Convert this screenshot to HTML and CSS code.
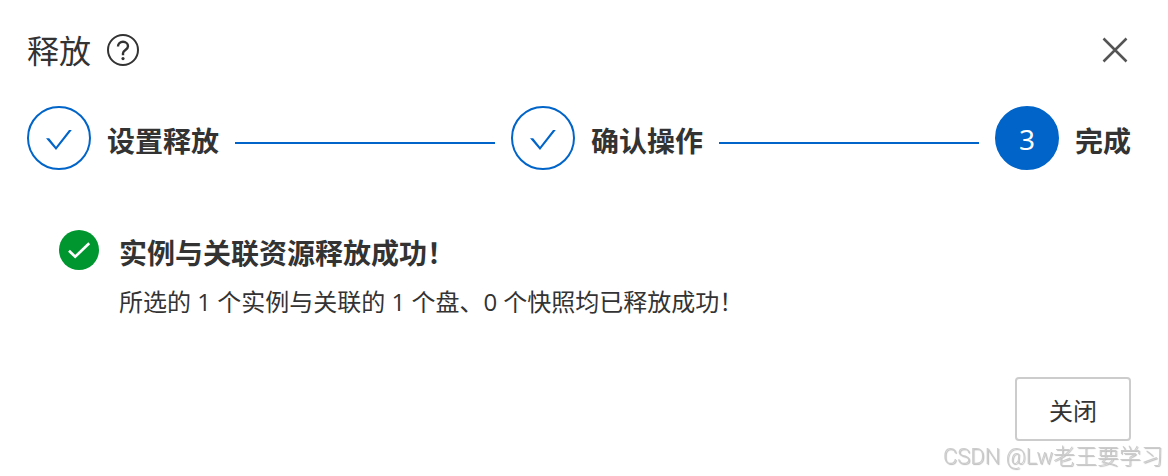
FILE: index.html
```html
<!DOCTYPE html>
<html lang="zh-cn">

<head>
    <meta charset="UTF-8">
    <meta name="viewport" content="width=device-width, initial-scale=1.0">
    <title>释放</title>
    <link rel="stylesheet" href="styles.css">
</head>

<body>
    <div class="dialog" role="dialog" aria-labelledby="dialog-title">
        <div class="header">
            <h1 class="title" id="dialog-title">释放</h1>
            <button class="icon-btn help" type="button" aria-label="帮助">
                <svg width="32" height="32" viewBox="0 0 32 32" fill="none" stroke="#333" stroke-width="2">
                    <circle cx="16" cy="16" r="15" />
                    <path d="M11 12.6C11 9.6 13.2 7.8 16 7.8s5 1.8 5 4.5c0 3.6-5 3.8-5 7v1.9" stroke-width="2.4" />
                    <circle cx="16" cy="24.6" r="1.6" fill="#333" stroke="none" />
                </svg>
            </button>
            <button class="icon-btn close" type="button" aria-label="关闭对话框">
                <svg width="32" height="32" viewBox="0 0 32 32" fill="none" stroke="#555" stroke-width="2.5">
                    <path d="M4.5 4.5l23 23M27.5 4.5l-23 23" />
                </svg>
            </button>
        </div>

        <ol class="steps">
            <li class="step">
                <span class="step-node">
                    <svg width="28" height="24" viewBox="0 0 28 24" fill="#0064c8">
                        <path d="M1 11.2h3.2l6.8 8.5L24 3h2.8L11 23z" />
                    </svg>
                </span>
                <span class="step-title">设置释放</span>
            </li>
            <li class="step">
                <span class="step-node">
                    <svg width="28" height="24" viewBox="0 0 28 24" fill="#0064c8">
                        <path d="M1 11.2h3.2l6.8 8.5L24 3h2.8L11 23z" />
                    </svg>
                </span>
                <span class="step-title">确认操作</span>
            </li>
            <li class="step step-active" aria-current="step">
                <span class="step-node">3</span>
                <span class="step-title">完成</span>
            </li>
        </ol>

        <div class="result">
            <svg class="result-icon" width="40" height="40" viewBox="0 0 40 40" fill="none">
                <circle cx="20" cy="20" r="20" fill="#00962f" />
                <path d="M10 20.8l6.2 6L30.2 13.2" stroke="#fff" stroke-width="2.6" />
            </svg>
            <div class="result-body">
                <h2 class="result-title">实例与关联资源释放成功！</h2>
                <p class="result-desc">所选的 1 个实例与关联的 1 个盘、0 个快照均已释放成功！</p>
            </div>
        </div>

        <div class="footer">
            <button class="btn" type="button">关闭</button>
        </div>
    </div>
    <div class="watermark">CSDN @Lw老王要学习</div>
</body>

</html>
```

FILE: styles.css
```css
* {
    box-sizing: border-box;
}

body {
    margin: 0;
    color: #333;
    background-color: #fff;
    font-family: "Open Sans", "Noto Sans CJK SC", sans-serif;
}

button {
    font-family: inherit;
    color: inherit;
    cursor: pointer;
}

.dialog {
    padding: 28px 37px 35px 27px;
}

.header {
    display: flex;
    align-items: center;
    height: 44px;
}

.title {
    margin: 0;
    padding-top: 2px;
    font-size: 32px;
    font-weight: 400;
    line-height: 44px;
}

.icon-btn {
    display: flex;
    padding: 0;
    border: none;
    background: none;
}

.help {
    margin-left: 16px;
}

.close {
    margin-left: auto;
}

/* steps */
.steps {
    display: flex;
    margin: 34px 0 0;
    padding: 0;
    list-style: none;
}

.step {
    display: flex;
    flex: 1;
    align-items: center;
    gap: 16px;
    margin-right: 16px;
}

.step:last-child {
    flex: none;
    margin-right: 0;
}

/* line to the next step */
.step:not(:last-child)::after {
    content: "";
    flex: 1;
    height: 2px;
    margin-top: 10px;
    background-color: #0064c8;
}

.step-node {
    display: flex;
    align-items: center;
    justify-content: center;
    width: 64px;
    height: 64px;
    padding-top: 2px;
    border: 2px solid #0064c8;
    border-radius: 50%;
    font-family: "Noto Sans", "Noto Sans CJK SC", sans-serif;
    font-size: 28px;
    line-height: 40px;
}

.step-active .step-node {
    color: #fff;
    background-color: #0064c8;
}

.step-title {
    padding-top: 6px;
    font-size: 28px;
    font-weight: 700;
    line-height: 40px;
}

/* result */
.result {
    display: flex;
    gap: 20px;
    margin-top: 60px;
    padding-left: 32px;
}

.result-icon {
    flex: none;
}

.result-title {
    margin: 0;
    font-size: 28px;
    line-height: 46px;
}

.result-desc {
    margin: 6px 0 0;
    font-size: 24px;
    font-weight: 400;
    line-height: 40px;
}

.footer {
    display: flex;
    justify-content: flex-end;
    margin-top: 55px;
}

.btn {
    height: 64px;
    padding: 0 32px;
    border: 2px solid #ccc;
    border-radius: 4px;
    background-color: #fff;
    font-size: 24px;
    font-weight: 400;
}

.watermark {
    position: fixed;
    right: 5px;
    bottom: 3px;
    color: #ccc;
    font-family: Roboto, "Noto Sans CJK SC", sans-serif;
    font-size: 22px;
    font-weight: 300;
    line-height: 32px;
    text-shadow: 1px 1px 1px #bbb;
}
```
